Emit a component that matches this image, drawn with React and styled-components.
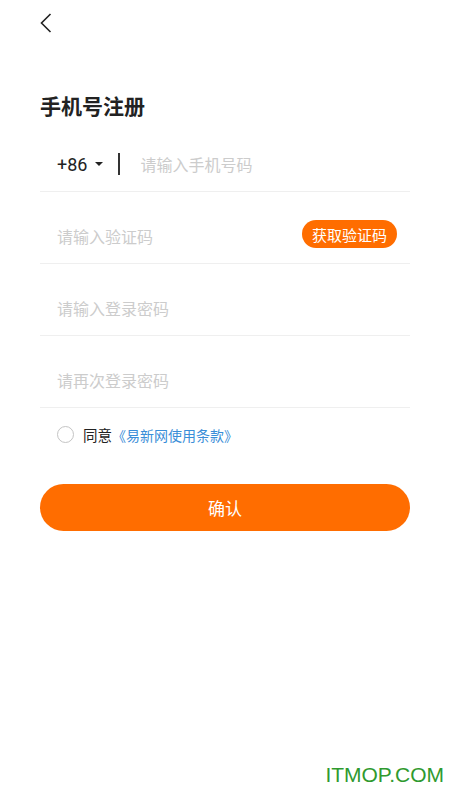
import React, { useState } from "react";
import styled, { createGlobalStyle } from "styled-components";

//Styling//

const GlobalStyle = createGlobalStyle`
  html, body {
    margin: 0;
    padding: 0;
    background: #ffffff;
  }
  body {
    font-family: "Noto Sans CJK SC", "Noto Sans", sans-serif;
    color: #222222;
  }
  * {
    box-sizing: border-box;
  }
`;

const Page = styled.div`
  position: relative;
  width: 450px;
  height: 800px;
  padding: 0 40px;
  background: #ffffff;
  overflow: hidden;
`;

const TopBar = styled.div`
  height: 46px;
  display: flex;
  align-items: center;
`;

const BackButton = styled.button`
  border: none;
  background: none;
  padding: 0;
  margin: 0;
  width: 14px;
  height: 20px;
  display: flex;
  align-items: center;
  cursor: pointer;
`;

const Title = styled.h3`
  margin: 45px 0 0;
  font-size: 21px;
  line-height: 29px;
  font-weight: 700;
  color: #222222;
`;

const Form = styled.div`
  display: flex;
  flex-direction: column;
`;

const Row = styled.div`
  height: 72px;
  padding: 17px 13px 0 17px;
  display: flex;
  align-items: center;
  border-bottom: 1px solid #efefef;
`;

const Code = styled.div`
  display: flex;
  align-items: center;
  font-family: Roboto, "Liberation Sans", sans-serif;
  font-size: 18px;
  color: #222222;
`;

const Caret = styled.span`
  margin-left: 8px;
  width: 0;
  height: 0;
  border-left: 4px solid transparent;
  border-right: 4px solid transparent;
  border-top: 4px solid #222222;
`;

const Cursor = styled.span`
  margin: 0 20px 0 15px;
  width: 2px;
  height: 22px;
  background: #333333;
`;

const Field = styled.input`
  flex: 1;
  min-width: 0;
  border: none;
  outline: none;
  padding: 0;
  background: transparent;
  font-family: "Noto Sans CJK SC", sans-serif;
  font-size: 16px;
  color: #222222;

  &::placeholder {
    color: #cccccc;
  }
`;

const CodeButton = styled.button`
  flex: none;
  height: 28px;
  margin-top: -4px;
  padding: 0 10px;
  border: none;
  border-radius: 14px;
  background: #ff6d00;
  color: #ffffff;
  font-family: "Noto Sans CJK SC", sans-serif;
  font-size: 15px;
  cursor: pointer;
`;

const Agreement = styled.label`
  display: flex;
  align-items: center;
  padding: 16px 0 0 17px;
  font-size: 14.5px;
  color: #222222;
  cursor: pointer;
`;

const Radio = styled.span`
  width: 17px;
  height: 17px;
  border-radius: 50%;
  border: 1px solid ${props => (props.checked ? "#ff6d00" : "#c4c4c4")};
  background: ${props => (props.checked ? "#ff6d00" : "#ffffff")};
  margin-right: 9px;
`;

const Terms = styled.a`
  color: #3a8ed8;
  font-size: 14px;
  text-decoration: none;
`;

const Confirm = styled.button`
  width: 100%;
  height: 47px;
  margin-top: 39px;
  border: none;
  border-radius: 24px;
  background: #ff6d00;
  color: #ffffff;
  font-family: "Noto Sans CJK SC", sans-serif;
  font-size: 17px;
  cursor: pointer;
`;

const Watermark = styled.div`
  position: absolute;
  right: 6px;
  bottom: 13px;
  font-family: "Liberation Sans", Arial, sans-serif;
  font-size: 21px;
  color: #2f9a2f;
`;

//Component//

const App = () => {
  const [agreed, setAgreed] = useState(false);

  return (
    <Page>
      <GlobalStyle />
      <TopBar>
        <BackButton>
          <svg width="12" height="20" viewBox="0 0 12 20">
            <path d="M10.5 1 L1.5 10 L10.5 19" fill="none" stroke="#222" strokeWidth="1.6" />
          </svg>
        </BackButton>
      </TopBar>

      <Title>手机号注册</Title>

      <Form>
        <Row>
          <Code>
            +86
            <Caret />
          </Code>
          <Cursor />
          <Field placeholder="请输入手机号码" />
        </Row>
        <Row>
          <Field placeholder="请输入验证码" />
          <CodeButton>获取验证码</CodeButton>
        </Row>
        <Row>
          <Field type="password" placeholder="请输入登录密码" />
        </Row>
        <Row>
          <Field type="password" placeholder="请再次登录密码" />
        </Row>
      </Form>

      <Agreement onClick={() => setAgreed(!agreed)}>
        <Radio checked={agreed} />
        同意
        <Terms href="#">《易新网使用条款》</Terms>
      </Agreement>

      <Confirm>确认</Confirm>

      <Watermark>ITMOP.COM</Watermark>
    </Page>
  );
};

export default App;
